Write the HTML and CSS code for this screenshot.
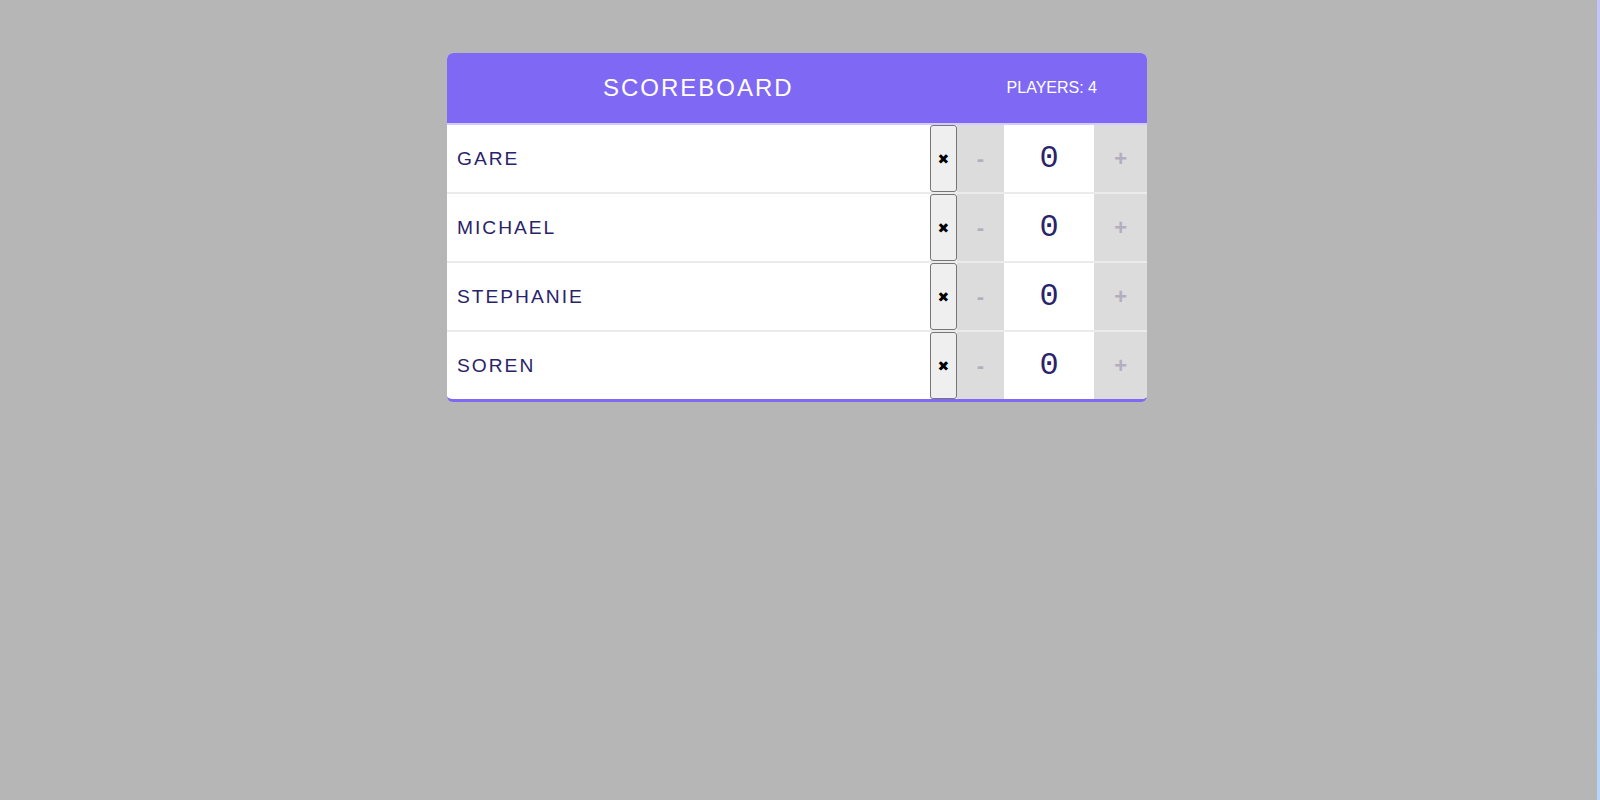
FILE: index.html
```html
<!DOCTYPE html>
<html lang="en">
<head>
<meta charset="utf-8">
<title>Scoreboard</title>
<link rel="stylesheet" href="styles.css">
</head>
<body>
<div class="page">
  <div class="scoreboard">
    <header class="header">
      <h1 class="title">Scoreboard</h1>
      <div class="stats">Players: 4</div>
    </header>
    <div class="player">
      <span class="player-name">Gare</span>
      <button class="remove">✖</button>
      <div class="counter">
        <button class="counter-action">-</button>
        <span class="counter-score">0</span>
        <button class="counter-action">+</button>
      </div>
    </div>
    <div class="player">
      <span class="player-name">Michael</span>
      <button class="remove">✖</button>
      <div class="counter">
        <button class="counter-action">-</button>
        <span class="counter-score">0</span>
        <button class="counter-action">+</button>
      </div>
    </div>
    <div class="player">
      <span class="player-name">Stephanie</span>
      <button class="remove">✖</button>
      <div class="counter">
        <button class="counter-action">-</button>
        <span class="counter-score">0</span>
        <button class="counter-action">+</button>
      </div>
    </div>
    <div class="player">
      <span class="player-name">Soren</span>
      <button class="remove">✖</button>
      <div class="counter">
        <button class="counter-action">-</button>
        <span class="counter-score">0</span>
        <button class="counter-action">+</button>
      </div>
    </div>
  </div>
</div>
<div class="edge"></div>
</body>
</html>
```

FILE: styles.css
```css
html, body {
  margin: 0;
  padding: 0;
}

body {
  background: #b6b6b6;
  font-family: "Liberation Sans", Arial, sans-serif;
  text-transform: uppercase;
  min-height: 800px;
}

.page {
  padding: 53px 6px 0 0;
}

.scoreboard {
  width: 700px;
  margin: 0 auto;
  background: #ffffff;
  border-radius: 6px;
  border-bottom: 3px solid #7f69f4;
  overflow: hidden;
}

.header {
  display: flex;
  align-items: center;
  height: 70px;
  background: #7f69f4;
  border-bottom: 2px solid #d3cbfc;
  color: #ffffff;
}

.title {
  flex: 1;
  margin: 0;
  text-align: center;
  font-size: 24px;
  font-weight: normal;
  letter-spacing: 2px;
}

.stats {
  padding: 0 50px 0 57px;
  font-size: 16px;
}

.player {
  display: flex;
  height: 67px;
  border-bottom: 2px solid #ebebeb;
}

.player:last-child {
  border-bottom: none;
}

.player-name {
  flex: 1;
  display: flex;
  align-items: center;
  padding: 0 10px;
  font-size: 19.2px;
  letter-spacing: 2px;
  color: #29236a;
}

.remove {
  width: 27px;
  padding: 0;
  margin: 0;
  background: #efefef;
  border: 1px solid #767676;
  border-radius: 3px;
  font-family: "DejaVu Sans", sans-serif;
  font-size: 14px;
  color: #000000;
}

.counter {
  display: flex;
}

.counter-action {
  margin: 0;
  padding: 0 20px;
  border: none;
  background: #dcdcdc;
  font-family: "Liberation Sans", Arial, sans-serif;
  font-size: 22px;
  font-weight: bold;
  color: #b3aebd;
}

.counter-score {
  width: 90px;
  display: flex;
  align-items: center;
  justify-content: center;
  font-family: "Liberation Mono", monospace;
  font-size: 32px;
  color: #29236a;
}

.edge {
  position: fixed;
  top: 0;
  right: 0;
  width: 3px;
  height: 100%;
  background: linear-gradient(#c4c4fb, #b6d6f9);
}
```
